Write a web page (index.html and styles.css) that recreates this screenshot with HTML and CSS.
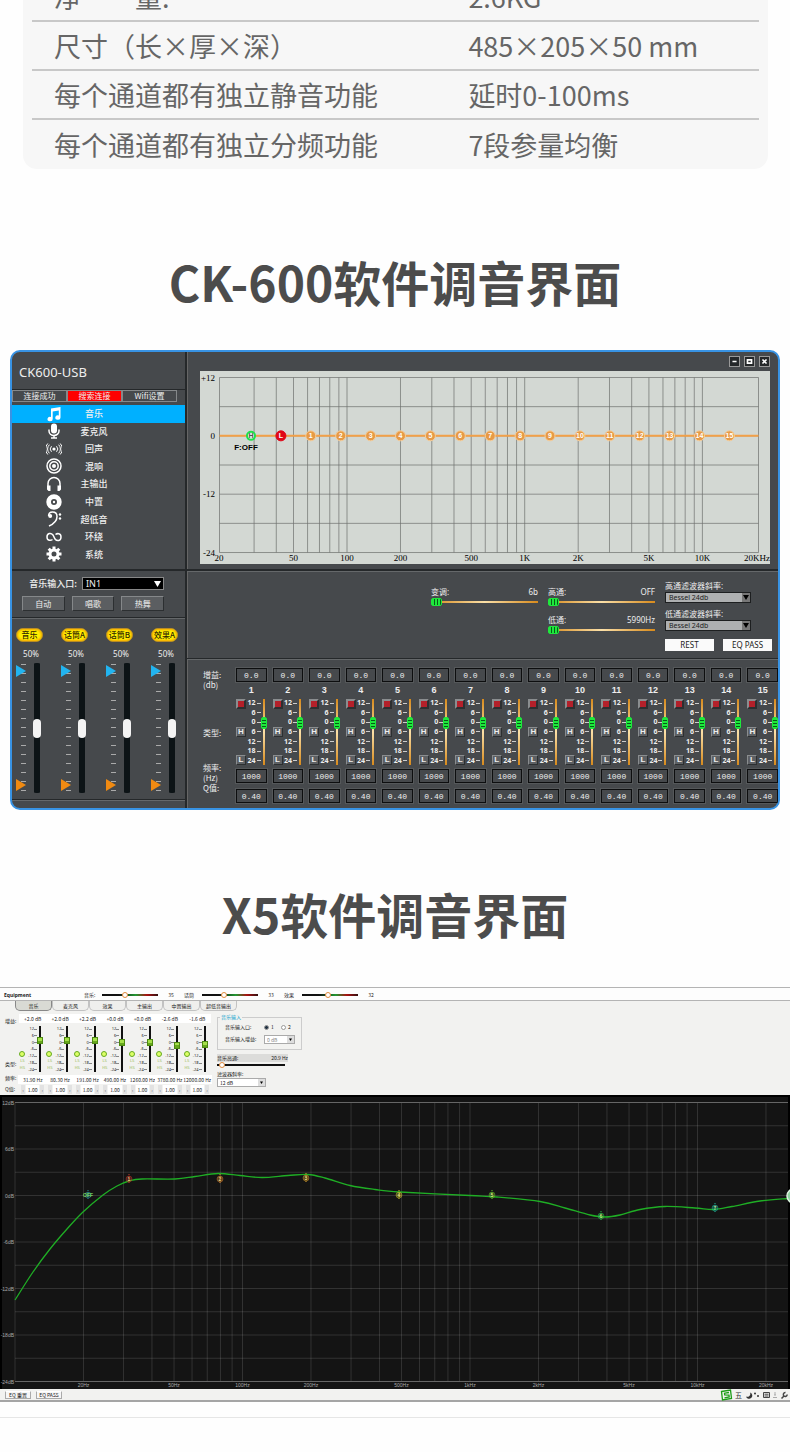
FILE: index.html
```html
<!DOCTYPE html>
<html lang="zh-CN">
<head>
    <meta charset="UTF-8">
    <meta name="viewport" content="width=device-width, initial-scale=1.0">
    <title>CK-600 / X5 软件调音界面</title>
    <link rel="stylesheet" href="styles.css">
</head>
<body>
    <section class="spec">
        <table class="spec-table">
            <tr><td>净&#12288;&#12288;量:</td><td>2.6KG</td></tr>
            <tr><td>尺寸（长×厚×深）</td><td>485×205×50 mm</td></tr>
            <tr><td>每个通道都有独立静音功能</td><td>延时0-100ms</td></tr>
            <tr><td>每个通道都有独立分频功能</td><td>7段参量均衡</td></tr>
        </table>
    </section>

    <h2 class="title">CK-600软件调音界面</h2>

    <section class="ck">
        <div class="ck-side">
            <div class="ck-name">CK600-USB</div>
            <div class="ck-tabs">
                <button type="button">连接成功</button>
                <button type="button" class="on">搜索连接</button>
                <button type="button">Wifi设置</button>
            </div>
            <nav class="ck-menu">
                <a href="#" class="on">
                    <svg viewBox="0 0 16 16"><path d="M5 2.5 14.500 1v10.500a2.600 2.200 0 1 1-1.700-2V4.600L6.700 5.600v7.400a2.600 2.200 0 1 1-1.700-2z"/></svg>
                    <span>音乐</span>
                </a>
                <a href="#">
                    <svg viewBox="0 0 16 16"><rect x="5" y="0.500" width="6" height="10" rx="3"/><path class="line" d="M3 6.500v1.500a5 4.500 0 0 0 10 0V6.500M8 12.500v2.500M5 15h6"/></svg>
                    <span>麦克风</span>
                </a>
                <a href="#">
                    <svg viewBox="0 0 16 16"><circle cx="8" cy="8" r="1.600"/><path class="wave" d="M5.500 5.200a4 4 0 0 0 0 5.600M10.500 5.200a4 4 0 0 1 0 5.600M3.400 3.700a6 6 0 0 0 0 8.600M12.600 3.700a6 6 0 0 1 0 8.600M1.800 2.500a8 8 0 0 0 0 11M14.200 2.500a8 8 0 0 1 0 11"/></svg>
                    <span>回声</span>
                </a>
                <a href="#">
                    <svg viewBox="0 0 16 16"><circle class="line" cx="8" cy="8" r="7"/><circle class="line" cx="8" cy="8" r="4.200"/><circle cx="8" cy="8" r="2"/></svg>
                    <span>混响</span>
                </a>
                <a href="#">
                    <svg viewBox="0 0 16 16"><path class="line" d="M2 12V7.500a6 6 0 0 1 12 0V12"/><path d="M1 9.500h3.500V15H2.500L1 13.500zM15 9.500h-3.500V15h2l1.500-1.500z"/></svg>
                    <span>主输出</span>
                </a>
                <a href="#">
                    <svg viewBox="0 0 16 16"><path fill-rule="evenodd" d="M8 .3a7.700 7.700 0 1 0 0 15.400A7.700 7.700 0 0 0 8 .3zM8 5a3 3 0 1 1 0 6 3 3 0 0 1 0-6z"/><circle cx="8" cy="8" r="1.200"/></svg>
                    <span>中置</span>
                </a>
                <a href="#">
                    <svg viewBox="0 0 16 16"><circle cx="4.200" cy="5" r="2"/><path class="line" d="M2.600 5C2.600 2 4.500 1 6.500 1c3 0 4.500 2 4.500 4.500 0 4.500-3.500 7.500-8 9.500"/><circle cx="14" cy="3.500" r="1.200"/><circle cx="14" cy="7.500" r="1.200"/></svg>
                    <span>超低音</span>
                </a>
                <a href="#">
                    <svg viewBox="0 0 16 16"><path class="line" d="M9.500 5.500C11 4.300 15 3.800 15 8s-4 4.500-6 2L7 6C5 3.500 1 4 1 8s4 3.700 5.500 2.500"/></svg>
                    <span>环绕</span>
                </a>
                <a href="#">
                    <svg viewBox="0 0 16 16"><circle class="gear" cx="8" cy="8" r="4"/><path class="cog" d="M8 .5v3M8 12.500v3M.5 8h3M12.500 8h3M2.700 2.700l2.100 2.100M11.200 11.200l2.100 2.100M2.700 13.300l2.100-2.100M11.200 4.800l2.100-2.100"/></svg>
                    <span>系统</span>
                </a>
            </nav>
            <div class="ck-source">
                <div class="ck-in">
                    <label for="ck-input">音乐输入口:</label>
                    <select id="ck-input"><option>IN1</option></select>
                </div>
                <div class="ck-modes">
                    <button type="button">自动</button>
                    <button type="button">唱歌</button>
                    <button type="button">热舞</button>
                </div>
            </div>
            <div class="ck-mixer" id="ck-mixer"></div>
        </div>

        <div class="ck-main">
            <div class="ck-bar">
                <button type="button" aria-label="最小化"><svg viewBox="0 0 11 11"><path d="M3 5.500h5"/></svg></button>
                <button type="button" aria-label="最大化"><svg viewBox="0 0 11 11"><path d="M3 3.500h5v4H3z"/></svg></button>
                <button type="button" aria-label="关闭"><svg viewBox="0 0 11 11"><path d="M3 3l5 5M8 3l-5 5"/></svg></button>
            </div>
            <svg class="ck-chart" id="ck-chart" viewBox="0 0 570 193"></svg>
            <div class="ck-filters">
                <div class="col">
                    <div class="slide">
                        <label for="pitch">变调:</label><output>6b</output>
                        <input type="range" id="pitch" value="0">
                    </div>
                </div>
                <div class="col">
                    <div class="slide">
                        <label for="hp">高通:</label><output>OFF</output>
                        <input type="range" id="hp" value="0">
                    </div>
                    <div class="slide">
                        <label for="lp">低通:</label><output>5990Hz</output>
                        <input type="range" id="lp" value="0">
                    </div>
                </div>
                <div class="col slopes">
                    <label for="hps">高通滤波器斜率:</label>
                    <select id="hps"><option>Bessel 24db</option></select>
                    <label for="lps">低通滤波器斜率:</label>
                    <select id="lps"><option>Bessel 24db</option></select>
                    <div class="acts">
                        <button type="button">REST</button>
                        <button type="button">EQ PASS</button>
                    </div>
                </div>
            </div>
            <div class="ck-eq">
                <div class="ck-eq-labels">
                    <div class="gain">增益:<br>(db)</div>
                    <div class="type">类型:</div>
                    <div class="freq">频率:<br>(Hz)<br>Q值:</div>
                </div>
                <div class="ck-bands" id="ck-bands"></div>
            </div>
        </div>
    </section>

    <h2 class="title">X5软件调音界面</h2>

    <section class="x5">
        <div class="x5-top">
            <b>Equipment</b>
            <div class="vol"><label for="v1">音乐:</label><input type="range" id="v1" value="40"><output>35</output></div>
            <div class="vol"><label for="v2">话筒</label><input type="range" id="v2" value="38"><output>33</output></div>
            <div class="vol"><label for="v3">效果</label><input type="range" id="v3" value="46"><output>32</output></div>
        </div>
        <div class="x5-tabs">
            <button type="button" class="on">音乐</button>
            <button type="button">麦克风</button>
            <button type="button">效果</button>
            <button type="button">主输出</button>
            <button type="button">中置输出</button>
            <button type="button">超低音输出</button>
        </div>
        <div class="x5-body">
            <div class="x5-labels">
                <span>增益:</span>
                <span class="type">类型:</span>
                <span>频率:</span>
                <span>Q值:</span>
            </div>
            <div class="x5-bands" id="x5-bands"></div>
            <div class="x5-opts">
                <fieldset>
                    <legend>音乐输入</legend>
                    <div class="opt">
                        <span class="name">音乐输入口:</span>
                        <label><input type="radio" name="src" checked> 1</label>
                        <label><input type="radio" name="src"> 2</label>
                    </div>
                    <div class="opt">
                        <label class="name" for="x5-gain">音乐输入增益:</label>
                        <select id="x5-gain"><option>0 dB</option></select>
                    </div>
                </fieldset>
                <div class="x5-hp">
                    <div class="cap"><label for="x5-hp">音乐高通:</label><output>20.9 Hz</output></div>
                    <input type="range" id="x5-hp" value="4">
                </div>
                <label for="x5-slope">滤波器斜率:</label>
                <select id="x5-slope"><option>12 dB</option></select>
            </div>
        </div>
        <svg class="x5-chart" id="x5-chart" viewBox="0 0 790 294"></svg>
        <div class="x5-foot">
            <button type="button">EQ 重置</button>
            <button type="button">EQ PASS</button>
            <svg class="ime" viewBox="0 0 70 12">
                <path class="s" d="M1.500 2.500 10.500 1l1 8.500-9 1.500z"/>
                <path class="s" d="M9 3.500 4.500 4.200l.2 1.700 4.300.2.200 1.900-4.700.8"/>
                <text x="15" y="9">五</text>
                <path class="k" d="M30 3.500a3 3 0 0 1-4 4 3.200 3.200 0 1 0 4-4z"/>
                <circle class="k" cx="35" cy="4.500" r="1"/><circle class="k" cx="38" cy="7" r="1"/>
                <path class="d" d="M43.500 3.500h6v5h-6zM44.500 5.200h4M44.500 7h4"/>
                <path class="p" d="M55 3v3M53 8.500h4M54 6h2"/>
                <path class="w" d="M61.500 9.500l3-3M64 7a2 2 0 0 1 1.500-3.500M64 7a2 2 0 0 0 3.200-1.500"/>
            </svg>
        </div>
    </section>
    <hr class="end">

    <script src="script.js"></script>
</body>
</html>
```

FILE: styles.css
```css
* {
    box-sizing: border-box;
}
body {
    margin: 0;
    background: #fefefe;
    font-family: "Noto Sans CJK SC", sans-serif;
    overflow-x: hidden;
}
button, input, select {
    font: inherit;
    color: inherit;
    margin: 0;
    padding: 0;
    border: 0;
    border-radius: 0;
    background: none;
}
select, input[type="range"], input[type="radio"] {
    appearance: none;
    -webkit-appearance: none;
}
a {
    color: inherit;
    text-decoration: none;
}
svg {
    display: block;
}

/* spec table */
.spec {
    margin: 0 22px 0 23px;
    padding: 0 9px 1px;
    height: 169px;
    overflow: hidden;
    display: flex;
    align-items: flex-end;
    background: #f7f7f7;
    border-radius: 0 0 14px 14px;
}
.spec-table {
    width: 100%;
    border-collapse: collapse;
    color: #666;
    font-size: 27px;
    line-height: 47px;
}
.spec-table td {
    padding: 0 0 0 22px;
    height: 49px;
}
.spec-table td:first-child {
    width: 57%;
}
.spec-table tr + tr td {
    border-top: 2px solid #c8c8c8;
}

.title {
    margin: 76px 0 33px;
    text-align: center;
    font-size: 48px;
    line-height: 72px;
    font-weight: 700;
    color: #4c4c4c;
}

/* CK-600 window */
.ck {
    display: flex;
    margin: 0 10px;
    border: 2px solid #3893e4;
    border-radius: 10px;
    background: #46494c;
    color: #eee;
    overflow: hidden;
    font-size: 8px;
}
.ck-side {
    width: 175px;
    flex: none;
    border-right: 2px solid #25282a;
    box-shadow: 1px 0 #666;
}
.ck-name {
    height: 38px;
    padding: 2px 7px 0;
    font-family: "Noto Sans", sans-serif;
    font-size: 13px;
    line-height: 36px;
    border-bottom: 1px solid #25282a;
}
.ck-tabs {
    display: flex;
    width: 165px;
    height: 12px;
    line-height: 10px;
}
.ck-tabs button {
    flex: 1;
    border: 1px solid #85888a;
}
.ck-tabs .on {
    background: #f00;
}
.ck-menu {
    display: grid;
    grid-auto-rows: 1fr;
    height: 158px;
    margin: 3px 0 6px;
    font-size: 9px;
    font-weight: 500;
}
.ck-menu a {
    display: flex;
    align-items: center;
    padding-left: 34px;
}
.ck-menu .on {
    background: #00b0ff;
}
.ck-menu svg {
    width: 16px;
    height: 16px;
    fill: #fff;
}
.ck-menu span {
    width: 64px;
    text-align: center;
}
.ck-menu .line, .ck-menu .wave, .ck-menu .gear {
    fill: none;
    stroke: #fff;
    stroke-width: 1.5;
}
.ck-menu .wave {
    stroke-width: 1;
}
.ck-menu .gear {
    stroke-width: 3;
}
.ck-menu .cog {
    stroke: #fff;
    stroke-width: 3;
}
.ck-source {
    padding: 6px 10px 0;
    height: 49px;
    border-top: 2px solid #25282a;
    border-bottom: 1px solid #25282a;
    box-shadow: 0 1px #65686a;
}
.ck-in {
    display: flex;
    align-items: center;
    justify-content: flex-end;
    gap: 5px;
    width: 142px;
    height: 13px;
    font-size: 9px;
    font-weight: 500;
}
.ck-in select {
    width: 82px;
    height: 13px;
    padding-left: 3px;
    border: 1px solid #888;
    font-family: "Noto Sans", sans-serif;
    font-weight: 400;
    line-height: 11px;
    background: #000 url("data:image/svg+xml,%3Csvg xmlns='http://www.w3.org/2000/svg' width='7' height='6'%3E%3Cpath d='M0 0h7L3.500 6z' fill='white'/%3E%3C/svg%3E") no-repeat right 2px center;
}
.ck-modes {
    display: flex;
    gap: 7px;
    width: 142px;
    margin-top: 6px;
}
.ck-modes button {
    flex: 1;
    height: 15px;
    line-height: 13px;
    border: 1px solid;
    border-color: #85888a #2c2f31 #2c2f31 #85888a;
    background: #5b5e61;
}
.ck-mixer {
    display: flex;
    height: 182px;
    padding: 10px 0 0 4px;
    border-bottom: 1px solid #25282a;
    box-shadow: 0 1px #65686a;
}
.strip {
    flex: none;
    width: 45px;
}
.strip label {
    display: block;
    width: 27px;
    height: 14px;
    border: 1px solid #b98b22;
    border-radius: 7px;
    background: #fff000;
    box-shadow: inset 0 0 2px 1px #f8a800;
    color: #332800;
    font-weight: 500;
    line-height: 12px;
    text-align: center;
    white-space: nowrap;
}
.strip output {
    display: block;
    width: 30px;
    height: 21px;
    font-family: "Noto Sans", sans-serif;
    line-height: 24px;
    text-align: center;
}
.strip div {
    display: flex;
    gap: 5px;
}
.strip svg {
    width: 12px;
    height: 130px;
}
.strip .tick {
    stroke: #aaa;
}
.vert {
    writing-mode: vertical-lr;
    direction: rtl;
}
.strip .vert {
    width: 8px;
    height: 130px;
    border-radius: 3px;
    background: linear-gradient(to right, transparent 1px, #0c1316 1px 7px, transparent 7px);
}
.strip .vert::-webkit-slider-thumb {
    -webkit-appearance: none;
    width: 8px;
    height: 19px;
    border-radius: 4px;
    background: #f4f4f4;
}

.ck-main {
    flex: 1;
    min-width: 0;
}
.ck-bar {
    display: flex;
    justify-content: flex-end;
    gap: 4px;
    height: 19px;
    padding: 4px 8px 0;
}
.ck-bar button {
    width: 11px;
    height: 11px;
    border: 1px solid #999;
    background: #25282a;
}
.ck-bar svg {
    width: 9px;
    height: 9px;
    fill: none;
    stroke: #fff;
    stroke-width: 2;
}
.ck-chart {
    width: calc(100% - 21px);
    margin-left: 13px;
    background: #d3d8d3;
    font: 9px "Liberation Serif", serif;
}
.ck-chart .grid {
    stroke: #6d716e;
    stroke-opacity: 0.7;
}
.ck-chart .flat {
    stroke: #f2a048;
    stroke-width: 2;
}
.ck-chart .hint {
    font: bold 8px "Liberation Sans", sans-serif;
}
.ck-chart .dot {
    stroke: #f4cf9f;
    fill: #e79a45;
}
.ck-chart .dot-h {
    stroke: #1fe04a;
    stroke-width: 2;
    fill: #e8f0e8;
}
.ck-chart .dot-l {
    stroke: #e00718;
    fill: #e00718;
}
.ck-chart .num {
    font: bold 7px "Liberation Sans", sans-serif;
    fill: #fff;
}
.ck-chart .num-h {
    fill: #555;
}
.ck-filters {
    display: grid;
    grid-template-columns: repeat(3, 107px);
    justify-content: end;
    gap: 10px;
    height: 89px;
    margin-top: 5px;
    padding: 0 6px;
    border-top: 2px solid #25282a;
    box-shadow: inset 0 1px #65686a;
    font-family: "Noto Sans", "Noto Sans CJK SC", sans-serif;
    line-height: 11px;
}
.ck-filters .col {
    padding-top: 15px;
}
.slide {
    display: grid;
    grid-template-columns: 1fr auto;
    margin-bottom: 7px;
}
.slide input {
    grid-column: span 2;
    width: 100%;
    height: 10px;
    background: linear-gradient(to right, #d78a1c, #fbe0a8 50%, #d78a1c) center / 100% 2px no-repeat;
}
.slide input::-webkit-slider-thumb {
    -webkit-appearance: none;
    width: 11px;
    height: 8px;
    border: 1px solid #1ee83c;
    border-radius: 2px;
    background: repeating-linear-gradient(to right, #1ee83c 0 2px, #075c18 2px 3px);
}
.ck-filters .slopes {
    display: flex;
    flex-direction: column;
    padding-top: 9px;
}
.slopes select {
    width: 86px;
    height: 11px;
    margin: 1px 0 5px;
    padding-left: 3px;
    border: 1px solid #1d1f20;
    color: #222;
    font-size: 7px;
    line-height: 9px;
    background: #aeb0b1 url("data:image/svg+xml,%3Csvg xmlns='http://www.w3.org/2000/svg' width='8' height='9'%3E%3Cpath d='M0 0h8v9H0z' fill='%23777'/%3E%3Cpath d='M1 2h6L4 7z' fill='black'/%3E%3C/svg%3E") no-repeat right center;
}
.acts {
    display: flex;
    gap: 9px;
    margin-top: 3px;
}
.acts button {
    flex: 1;
    height: 12px;
    background: #fafafa;
    color: #222;
    line-height: 12px;
}
.ck-eq {
    display: flex;
    padding: 9px 0 5px 16px;
    border-top: 1px solid #25282a;
    box-shadow: inset 0 1px #65686a;
}
.ck-eq-labels {
    width: 33px;
    line-height: 10px;
}
.ck-eq-labels .gain {
    height: 31px;
    padding-top: 2px;
}
.ck-eq-labels .type {
    height: 64px;
    line-height: 68px;
}
.ck-bands {
    flex: 1;
    display: grid;
    grid-template-columns: repeat(15, minmax(0, 1fr));
    column-gap: 6px;
}
.band > input {
    display: block;
    width: 100%;
    height: 14px;
    border: 1px solid #0d0e0f;
    outline: 1px solid #55585a;
    font: 8px "Liberation Mono", monospace;
    text-align: center;
}
.band > input:last-child {
    margin-top: 6px;
}
.band > label {
    display: block;
    font: bold 9px/17px "Liberation Sans", sans-serif;
    text-align: center;
}
.band-body {
    display: flex;
    height: 66px;
    margin-bottom: 4px;
}
.band-types {
    display: flex;
    flex-direction: column;
    justify-content: space-between;
}
.band-types button {
    width: 10px;
    height: 10px;
    border: 1px solid;
    border-color: #8a8d8f #2c2f31 #2c2f31 #8a8d8f;
    background: #5d6063;
    font: bold 8px/8px "Liberation Sans", sans-serif;
}
.band-types .mute {
    background: #b3202a;
    border-width: 2px;
}
.band-scale {
    flex: 1;
    margin: 0;
    padding: 0;
    list-style: none;
    display: flex;
    flex-direction: column;
    justify-content: space-between;
    font: bold 7px/8px "Noto Sans", sans-serif;
}
.band-scale li {
    display: flex;
    align-items: center;
    justify-content: flex-end;
    gap: 1px;
}
.band-scale li::after {
    content: "";
    width: 4px;
    height: 1px;
    background: #ccc;
}
.band-body .vert {
    width: 6px;
    height: 66px;
    background: linear-gradient(#d78a1c, #fbe0a8 50%, #d78a1c) center / 2px 100% no-repeat;
}
.band-body .vert::-webkit-slider-thumb {
    -webkit-appearance: none;
    width: 6px;
    height: 12px;
    border: 1px solid #1ee83c;
    border-radius: 2px;
    background: repeating-linear-gradient(#1ee83c 0 2px, #075c18 2px 3px);
}

/* X5 window */
.ck + .title {
    margin: 67px 0 38px;
}
.x5 {
    border-top: 1px solid #b4b4b4;
    border-bottom: 2px solid #a5a5a5;
    background: #f2f2f0;
    color: #222;
    font-size: 5px;
    line-height: 8px;
}
.x5-top {
    display: flex;
    align-items: center;
    height: 13px;
    padding: 2px 4px 0;
    background: #fdfdfd;
    border-bottom: 1px solid #b4b4b4;
}
.x5-top b {
    width: 80px;
    font-family: "Noto Sans", sans-serif;
}
.vol {
    display: flex;
    align-items: center;
    width: 100px;
}
.vol label {
    width: 18px;
}
.vol input {
    width: 56px;
    height: 6px;
    background: linear-gradient(to right, #111 30%, #293 60%, #a11 80%, #311) center / 100% 2px no-repeat;
}
.vol output {
    width: 26px;
    text-align: center;
}
.vol input::-webkit-slider-thumb, .x5-hp input::-webkit-slider-thumb {
    -webkit-appearance: none;
    width: 6px;
    height: 6px;
    border: 1px solid #e08a3c;
    border-radius: 3px;
    background: #fff;
}
.x5-tabs {
    display: flex;
    height: 10px;
    padding-left: 15px;
}
.x5-tabs button {
    width: 37px;
    border: 1px solid #c2c2c2;
    border-top: 0;
    border-radius: 0 0 5px 5px;
    background: #efefed;
    white-space: nowrap;
    line-height: 8px;
}
.x5-tabs .on {
    background: #d9dad4;
    border-color: #888;
}
.x5-body {
    display: flex;
    height: 84px;
    padding: 3px 0 0 5px;
}
.x5-labels {
    width: 14px;
    display: flex;
    flex-direction: column;
    gap: 3px;
    padding-top: 3px;
    white-space: nowrap;
}
.x5-labels .type {
    padding-top: 32px;
    height: 43px;
}
.x5-bands {
    display: grid;
    grid-template-columns: repeat(7, minmax(0, 1fr));
    width: 192px;
}
.x5-band > input, .qbox input {
    display: block;
    height: 9px;
    background: #fff;
    text-align: center;
}
.x5-band > input {
    width: 100%;
}
/* the longest frequency is a bit wider than its column */
.x5-band .hz {
    width: calc(100% + 2px);
    margin: 0 -1px;
}
.x5-mid {
    display: flex;
    height: 47px;
    margin: 3px 0 2px;
}
.x5-types {
    display: flex;
    flex-direction: column;
    justify-content: flex-end;
    width: 7px;
    padding-bottom: 2px;
}
.x5-types button {
    height: 7px;
    line-height: 7px;
    color: #9b5;
    font-size: 4px;
}
.x5-types button:first-child {
    width: 6px;
    height: 6px;
    border: 1px solid #6a2;
    border-radius: 3px;
    background: #df6;
}
.x5-mid .band-scale {
    flex: none;
    width: 11px;
    font: 4px/6px "Noto Sans", sans-serif;
}
.x5-mid .band-scale li {
    gap: 0;
}
.x5-mid .band-scale li::after {
    width: 3px;
    background: #888;
}
.x5-mid .vert {
    width: 6px;
    height: 46px;
    background: linear-gradient(#111, #111) center / 2px 100% no-repeat;
}
.x5-mid .vert::-webkit-slider-thumb {
    -webkit-appearance: none;
    width: 6px;
    height: 7px;
    border: 1px solid #4d8a12;
    background: linear-gradient(#a5e04a 50%, #68a81e 50%);
}
.qbox {
    display: flex;
    gap: 1px;
    margin: 1px 2px 0;
}
.qbox button {
    width: 4px;
    font-size: 4px;
    background: #e2e2e2;
}
.qbox input {
    flex: 1;
    min-width: 0;
}
.x5-opts {
    width: 84px;
    padding-left: 2px;
    margin-left: 4px;
}
.x5-opts fieldset {
    margin: 0;
    padding: 1px 3px 4px 7px;
    width: 83px;
    border: 1px solid #ccc;
}
.x5-opts legend {
    padding: 0 1px;
    margin-left: -5px;
    line-height: 6px;
    color: #1aa6cf;
}
.opt {
    display: flex;
    align-items: center;
    height: 12px;
}
.opt .name {
    width: 39px;
    white-space: nowrap;
}
.opt label:not(.name) {
    display: flex;
    align-items: center;
    gap: 2px;
    width: 17px;
}
.opt input {
    width: 5px;
    height: 5px;
    border: 1px solid #999;
    border-radius: 50%;
    background: #fff;
}
.opt input:checked {
    background: #234;
}
.x5-opts select {
    display: block;
    width: 31px;
    height: 9px;
    padding-left: 2px;
    border: 1px solid #aaa;
    line-height: 7px;
    background: #fff url("data:image/svg+xml,%3Csvg xmlns='http://www.w3.org/2000/svg' width='7' height='7'%3E%3Cpath d='M0 0h7v7H0z' fill='%23ddd'/%3E%3Cpath d='M2 2.500h3L3.500 5z' fill='black'/%3E%3C/svg%3E") no-repeat right center;
}
.opt select {
    color: #888;
}
.x5-opts > select {
    width: 49px;
}
.x5-hp {
    width: 71px;
    margin: 4px 0 2px;
}
.x5-hp .cap {
    display: flex;
    justify-content: space-between;
    background: #dcdcda;
}
.x5-hp input {
    display: block;
    width: 68px;
    height: 6px;
    background: linear-gradient(#111, #111) center / 100% 2px no-repeat;
}
.x5-chart {
    width: 100%;
    background: #141414;
    font: 5px "Liberation Sans", sans-serif;
}
.x5-chart .grid {
    stroke: #fff;
    stroke-opacity: 0.13;
}
.x5-chart .axis {
    stroke: #666;
}
.x5-chart .edge {
    fill: none;
    stroke: #000;
    stroke-width: 2;
}
.x5-chart .lbl {
    fill: #aaa;
}
.x5-chart .curve {
    fill: none;
    stroke: #1fae25;
    stroke-width: 1.3;
}
.x5-foot {
    display: flex;
    align-items: center;
    gap: 5px;
    height: 11px;
    padding: 0 0 0 5px;
}
.x5-foot button {
    width: 26px;
    height: 8px;
    border: 1px solid #aaa;
    border-top-color: #fff;
    background: #f6f6f6;
    line-height: 6px;
    white-space: nowrap;
}
.ime {
    width: 70px;
    height: 12px;
    margin-left: auto;
    fill: none;
    stroke: #444;
}
.ime .s {
    stroke: #1c9c16;
    stroke-width: 1.3;
}
.ime .k, .ime text {
    fill: #333;
    stroke: none;
    font-size: 7px;
}
.ime .p {
    stroke: #aaa;
}
.ime .w {
    stroke-width: 1.5;
}
.end {
    margin: 15px 0 34px;
    border: 0;
    border-top: 1px solid #e6e6e6;
}
```

FILE: script.js
```javascript
// mixer strips
const strips = ['音乐', '话筒A', '话筒B', '效果A'];
let ticks = '';
for (let y = 1; y < 130; y += 9) {
    ticks += `<path class="tick" d="M5 ${y + 0.5}h5"/>`;
}
document.getElementById('ck-mixer').innerHTML = strips.map((name, i) => `
    <div class="strip">
        <label for="strip${i}">${name}</label>
        <output>50%</output>
        <div>
            <svg viewBox="0 0 12 130">${ticks}
                <path d="M0 2l10 6-10 6z" fill="#22b4f0"/>
                <path d="M0 116l10 6-10 6z" fill="#f08a12"/>
            </svg>
            <input class="vert" type="range" id="strip${i}" value="50">
        </div>
    </div>`).join('');

// 15 band equalizer
const scale = [12, 6, 0, 6, 12, 18, 24].map(n => `<li>${n}</li>`).join('');
let bands = '';
for (let i = 1; i <= 15; i++) {
    bands += `
    <div class="band">
        <input type="text" value="0.0" aria-label="增益 ${i}">
        <label for="band${i}">${i}</label>
        <div class="band-body">
            <div class="band-types">
                <button type="button" class="mute" aria-label="静音"></button>
                <button type="button">H</button>
                <button type="button">L</button>
            </div>
            <ul class="band-scale">${scale}</ul>
            <input class="vert" type="range" id="band${i}" min="-24" max="12" value="0">
        </div>
        <input type="text" value="1000" aria-label="频率 ${i}">
        <input type="text" value="0.40" aria-label="Q值 ${i}">
    </div>`;
}
document.getElementById('ck-bands').innerHTML = bands;

// frequencies of a log grid: 20, 30 ... 90, 100, 200 ...
function freqs(from, to) {
    const out = [];
    for (let d = 10; d <= 10000; d *= 10) {
        for (let n = 1; n < 10; n++) {
            if (n * d > from && n * d < to) out.push(n * d);
        }
    }
    return out;
}

function drawCk() {
    const x = f => 147 + 177.7 * (Math.log10(f) - 2);
    const row = 29.17;
    const left = 19.5, right = 558.5, top = 6.5;
    const bottom = top + row * 6;
    let s = '';
    const xs = [left, ...freqs(20, 20000).map(x), right];
    xs.forEach(v => s += `<path class="grid" d="M${v} ${top}V${bottom}"/>`);
    for (let i = 0; i <= 6; i++) {
        s += `<path class="grid" d="M${left} ${top + row * i}H${right}"/>`;
    }
    const y0 = top + row * 2;
    s += `<path class="flat" d="M${left} ${y0}H${right}"/>`;
    [['+12', 0], ['0', 2], ['-12', 4], ['-24', 6]].forEach(([t, i]) => {
        s += `<text x="15" y="${top + row * i + 3}" text-anchor="end">${t}</text>`;
    });
    [['20', 19], ['50', x(50)], ['100', x(100)], ['200', x(200)], ['500', x(500)], ['1K', x(1000)],
     ['2K', x(2000)], ['5K', x(5000)], ['10K', x(10000)], ['20KHz', 557]].forEach(([t, v]) => {
        s += `<text x="${v}" y="190" text-anchor="middle">${t}</text>`;
    });
    for (let i = 0; i < 17; i++) {
        const cx = 51 + i * 29.9;
        const cls = i === 0 ? 'dot-h' : i === 1 ? 'dot-l' : 'dot';
        const t = i === 0 ? 'H' : i === 1 ? 'L' : i - 1;
        s += `<circle class="${cls}" cx="${cx}" cy="${y0}" r="${i ? 5 : 4}"/>`;
        s += `<text class="num${i ? '' : ' num-h'}" x="${cx}" y="${y0 + 2.5}" text-anchor="middle">${t}</text>`;
    }
    s += `<text class="hint" x="46" y="${y0 + 14}" text-anchor="middle">F:OFF</text>`;
    document.getElementById('ck-chart').innerHTML = s;
}

// X5 bands: gain, frequency
const x5 = [
    ['+2.0', '31.90'], ['+2.0', '80.30'], ['+2.2', '191.00'], ['+0.0', '490.00'],
    ['+0.0', '1260.00'], ['-2.6', '3780.00'], ['-1.6', '12000.00']
];
const x5scale = [12, 6, 0, -6, -12, -18, -24].map(n => `<li>${n}</li>`).join('');
document.getElementById('x5-bands').innerHTML = x5.map(([gain, freq], i) => `
    <div class="x5-band">
        <input type="text" value="${gain} dB" aria-label="增益 ${i + 1}">
        <div class="x5-mid">
            <div class="x5-types">
                <button type="button" aria-label="峰值"></button>
                <button type="button">LS</button>
                <button type="button">HS</button>
            </div>
            <ul class="band-scale">${x5scale}</ul>
            <input class="vert" type="range" min="-24" max="12" step="0.1" value="${Number(gain)}" aria-label="推子 ${i + 1}">
        </div>
        <input type="text" class="hz" value="${freq} Hz" aria-label="频率 ${i + 1}">
        <div class="qbox">
            <button type="button">‹</button>
            <input type="text" value="1.00" aria-label="Q值 ${i + 1}">
            <button type="button">›</button>
        </div>
    </div>`).join('');

// smooth path through the points
function smooth(p) {
    let d = `M${p[0]}`;
    for (let i = 0; i < p.length - 1; i++) {
        const a = p[i - 1] || p[i], b = p[i], c = p[i + 1], e = p[i + 2] || c;
        d += `C${b[0] + (c[0] - a[0]) / 6} ${b[1] + (c[1] - a[1]) / 6} ${c[0] - (e[0] - b[0]) / 6} ${c[1] - (e[1] - b[1]) / 6} ${c[0]} ${c[1]}`;
    }
    return d;
}

function drawX5() {
    const x = f => 15 + 227.5 * Math.log10(f / 10);
    const top = 7.5, row = 23.25, bottom = top + row * 12;
    let s = '<path class="edge" d="M0 1H790M1 0V294M789 0V294"/>';
    [10, ...freqs(10, 22000)].forEach(f => s += `<path class="grid" d="M${x(f)} ${top}V${bottom}"/>`);
    for (let i = 0; i <= 12; i++) {
        s += `<path class="${i % 12 ? 'grid' : 'axis'}" d="M15 ${top + row * i}H788"/>`;
    }
    ['12dB', '6dB', '0dB', '-6dB', '-12dB', '-18dB', '-24dB'].forEach((t, i) => {
        s += `<text class="lbl" x="14" y="${top + row * 2 * i + 2}" text-anchor="end">${t}</text>`;
    });
    [[20, '20Hz'], [50, '50Hz'], [100, '100Hz'], [200, '200Hz'], [500, '500Hz'], [1000, '1kHz'],
     [2000, '2kHz'], [5000, '5kHz'], [10000, '10kHz'], [20000, '20kHz']].forEach(([f, t]) => {
        s += `<text class="lbl" x="${x(f)}" y="292" text-anchor="middle">${t}</text>`;
    });
    const curve = [[15, 205], [33, 177], [50, 154], [67, 134], [83, 117], [103, 100], [117, 91], [129, 86],
        [142, 84], [175, 84], [195, 81.5], [218, 78.5], [240, 80.5], [262, 82.5], [288, 80.5], [308, 79.5],
        [325, 83], [350, 90.5], [375, 94.5], [400, 97], [470, 100.5], [497, 102], [540, 106.5], [565, 113],
        [590, 120], [605, 122], [620, 120], [640, 114.5], [665, 111.5], [695, 113], [714, 114.5],
        [732, 111.5], [760, 106], [788, 103.5]];
    s += `<path class="curve" d="${smooth(curve)}"/>`;
    [[88, 100, '#2a8f9c', 'OFF'], [129, 84, '#c23a2a', '1'], [220, 84, '#d9822b', '2'], [306, 83, '#d9a02b', '3'],
     [399, 100, '#c9c22b', '4'], [492, 100, '#5fc22b', '5'], [601, 121, '#2bc24a', '6'], [715, 113, '#1fb79a', '7']].forEach(([cx, cy, c, t]) => {
        s += `<path d="M${cx} ${cy - 5}v10" stroke="${c}" stroke-dasharray="1 1"/>`;
        s += `<circle cx="${cx}" cy="${cy}" r="3" fill="${c}" fill-opacity="0.35" stroke="${c}" stroke-opacity="0.4"/>`;
        s += `<text x="${cx}" y="${cy + 2}" text-anchor="middle" fill="${t === 'OFF' ? '#9f6' : '#ee9'}">${t}</text>`;
    });
    s += '<circle cx="794" cy="101" r="7" fill="#8fd0a0" stroke="#dff5e2" stroke-width="1.5"/>';
    document.getElementById('x5-chart').innerHTML = s;
}

drawCk();
drawX5();
```
